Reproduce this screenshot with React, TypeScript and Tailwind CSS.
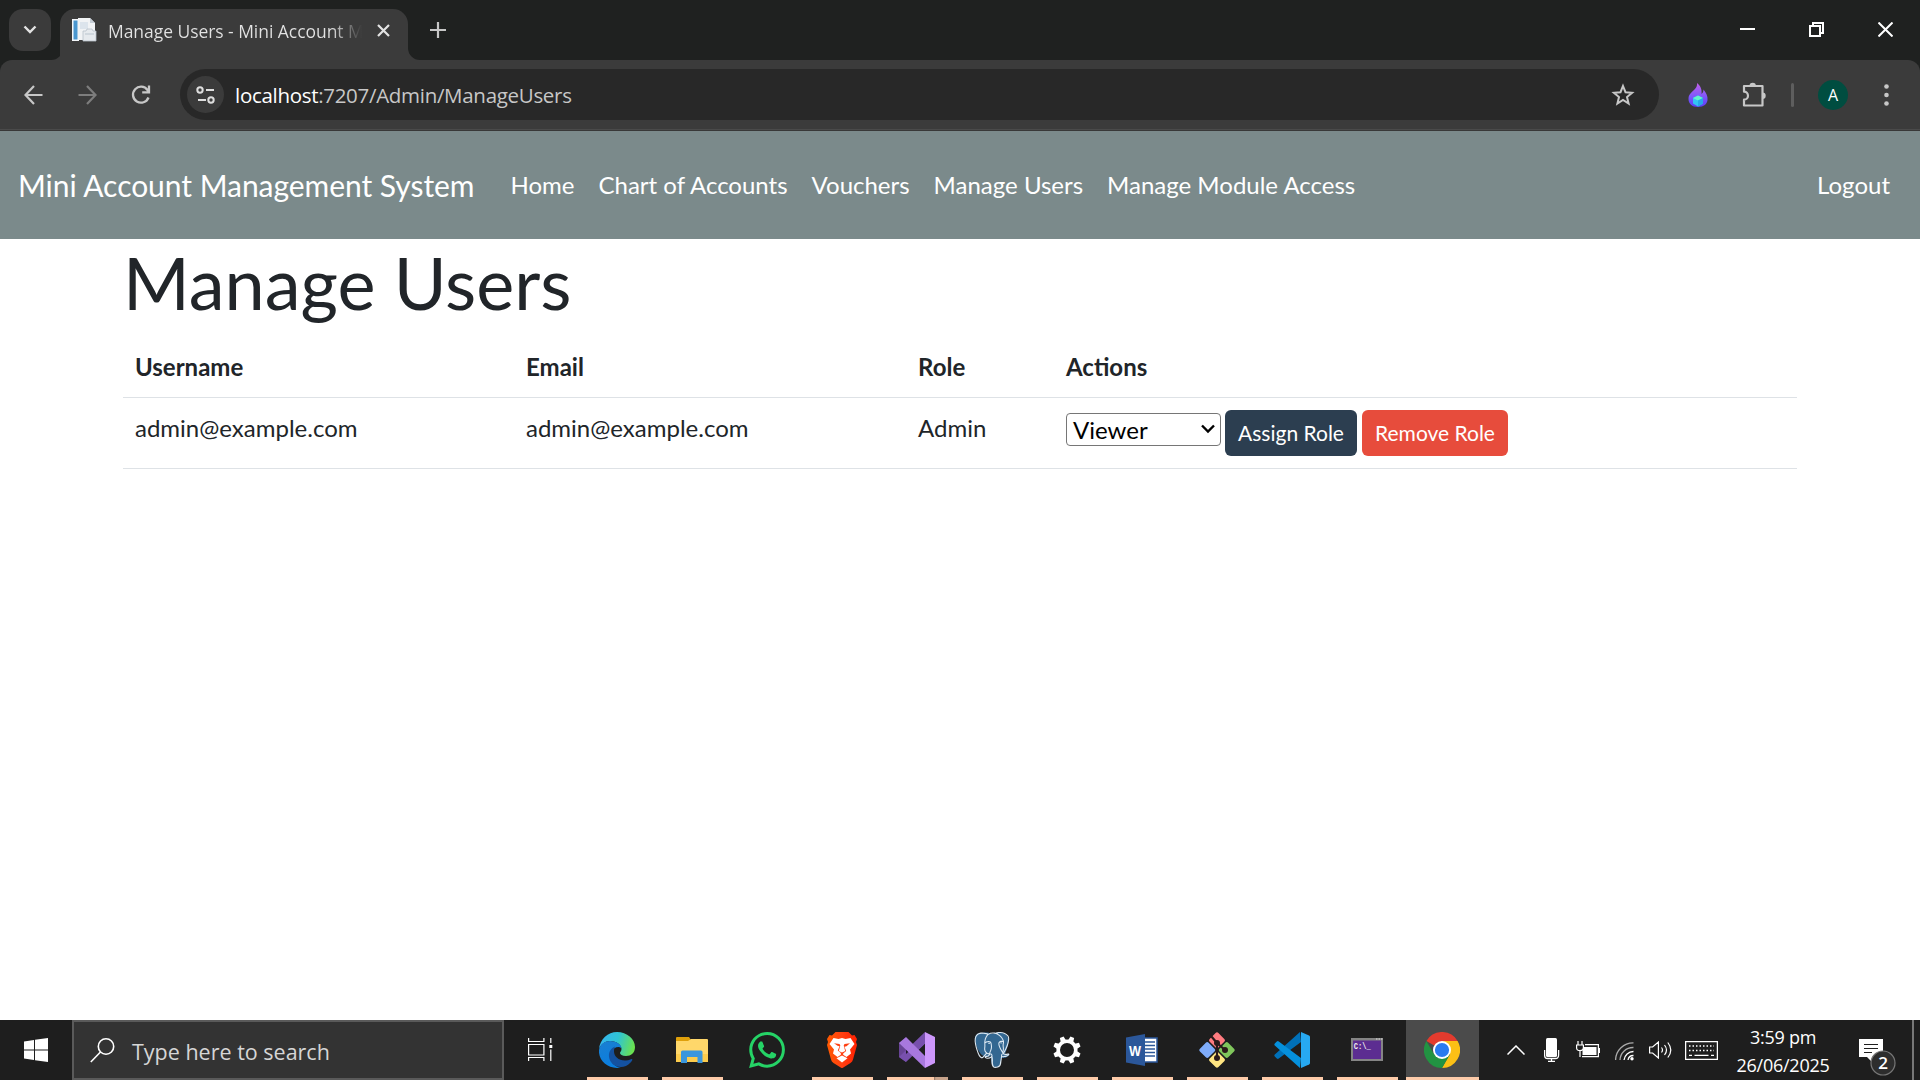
import React from "react";
import { SiPostgresql, SiWhatsapp } from "react-icons/si";

const ui = "font-['Open_Sans','Noto_Sans',sans-serif]";

function TabStrip() {
  return (
    <div className="flex h-[60px] items-start bg-[#1f2120] pl-[9px]">
      <div className="mt-[9px] flex h-[42px] w-[42px] items-center justify-center rounded-[14px] bg-[#3b3b3b]">
        <svg width="14" height="10" viewBox="0 0 14 10" fill="none" stroke="#e3e3e3" strokeWidth="2.4">
          <path d="M1.5 1.5 7 7l5.500-5.500" />
        </svg>
      </div>
      <div className="mt-[9px] flex h-[51px]">
        <svg className="mr-[-3px] self-end" width="12" height="12" viewBox="0 0 12 12">
          <path d="M12 0A12 12 0 0 1 0 12H12Z" fill="#3b3b3b" />
        </svg>
        <div className="flex h-full w-[348px] items-start rounded-t-[15px] bg-[#3b3b3b] pl-3">
          <svg className="mt-[8px] shrink-0" width="26" height="26" viewBox="0 0 26 26">
            <path d="M0 2h7v22H0z" fill="#f4f7fa" />
            <path d="M1.500 3.500h4v19h-4z" fill="#4a97d0" />
            <path d="M6 1h12l5 5v17H6z" fill="#f1f3f5" />
            <path d="M18 1v5h5z" fill="#c4ccd4" />
            <path d="M8 5h8v7H8z" fill="#dce4ec" />
            <path d="M11 14h3l1-2h5l1 2h3v10H11z" fill="#e6eaee" stroke="#b7c0c9" strokeWidth=".8" />
            <path d="M13 17h9" stroke="#b9c4ce" />
          </svg>
          <div className={`${ui} ml-[10px] mt-[10px] h-6 w-[254px] whitespace-nowrap bg-linear-to-r from-[#e3e3e3] from-88% to-[#3b3b3b] bg-clip-text text-[17.500px] leading-6 tracking-[-0.05px] text-transparent`}>
            Manage Users - Mini Account M
          </div>
          <svg className="ml-[15px] mt-[15px] shrink-0" width="13" height="13" viewBox="0 0 13 13" stroke="#e3e3e3" strokeWidth="2.200">
            <path d="m1 1 11 11M12 1 1 12" />
          </svg>
        </div>
        <svg className="self-end" width="12" height="12" viewBox="0 0 12 12">
          <path d="M0 0A12 12 0 0 0 12 12H0Z" fill="#3b3b3b" />
        </svg>
      </div>
      <svg className="ml-[10px] mt-[22px]" width="16" height="16" viewBox="0 0 16 16" stroke="#c7c7c7" strokeWidth="2.200">
        <path d="M8 0v16M0 8h16" />
      </svg>
      <div className="ml-auto mr-[27px] mt-[22px] flex">
        <svg className="mr-[54px]" width="15" height="15"><path d="M0 6h15v2H0z" fill="#fff" /></svg>
        <svg className="mr-[54px]" width="15" height="15" fill="none" stroke="#fff" strokeWidth="2">
          <path d="M1 4h10v10H1zM4 4V1h10v10h-3" />
        </svg>
        <svg width="15" height="15" stroke="#fff" strokeWidth="2"><path d="m.5.5 14 14m0-14-14 14" /></svg>
      </div>
    </div>
  );
}

function Toolbar() {
  return (
    <div className="bg-[#1f2120]">
      <div className="flex h-[71px] items-center rounded-t-[12px] border-b border-[#383838] bg-[#3b3b3b] pb-px pl-[24px] shadow-[inset_0_-1px_0_#4a4a4a]">
        <svg width="19" height="20" viewBox="0 0 19 20" fill="none" stroke="#c7c7c7" strokeWidth="2.200">
          <path d="M10 1 1.500 10l8.500 9M1.500 10H18.500" />
        </svg>
        <svg className="ml-[35px]" width="19" height="20" viewBox="0 0 19 20" fill="none" stroke="#7d7d7d" strokeWidth="2.200">
          <path d="m9 1 8.500 9L9 19M17.500 10H.5" />
        </svg>
        <svg className="ml-[34px]" width="20" height="20" viewBox="0 0 20 20" fill="none" stroke="#c7c7c7" strokeWidth="2.300">
          <path d="M17.500 12.500A8 8 0 1 1 16.500 5L18 7M18 .5V7.300H11.200" />
        </svg>
        <div className="ml-[29px] flex h-[51px] w-[1479px] items-center rounded-full bg-[#282828] pl-[7px]">
          <div className="flex h-[37px] w-[37px] items-center justify-center rounded-full bg-[#3b3b3b]">
            <svg width="20" height="18" viewBox="0 0 20 18" fill="none" stroke="#dedede" strokeWidth="2">
              <circle cx="4" cy="4" r="2.700" /><path d="M10 4h8M2 14h8" /><circle cx="15" cy="14" r="2.700" />
            </svg>
          </div>
          <div className={`${ui} ml-[11px] text-[20.500px] leading-7 tracking-[-0.3px] text-[#c7c7c7]`}>
            <span className="text-white">localhost</span>:7207/Admin/ManageUsers
          </div>
          <svg className="ml-auto mr-[24px]" width="24" height="24" viewBox="0 0 24 24" fill="none" stroke="#c7c7c7" strokeWidth="2">
            <path d="m12 3 2.500 6.200 6.600.5-5.100 4.300 1.600 6.500L12 17l-5.600 3.500L8 14 2.900 9.700l6.600-.5z" />
          </svg>
        </div>
        <svg className="ml-[29px]" width="20" height="24" viewBox="0 0 20 24">
          <defs><linearGradient id="flame" x1="0" y1="0" x2="0" y2="1"><stop stopColor="#c060e8" /><stop offset=".55" stopColor="#8057fb" /><stop offset="1" stopColor="#5840f5" /></linearGradient></defs>
          <path d="M9 0c4 3 5 7 4.500 11C15 10 15.500 8 15.500 6.500 18 10 20 13 19.500 17c-.5 4-3.500 7-9.500 7S.5 20.500.5 16 3 10 6 7c2-2 3.500-4 3-7Z" fill="url(#flame)" />
          <path d="m10 12.500 5 2.500v5.500l-5 3-5-3V15z" fill="#32c5f4" /><path d="m10 12.500 5 2.500-5 2.500L5 15z" fill="#62f3cb" /><path d="m10 17.500 5-2.500v5.500l-5 3z" fill="#28a8e8" />
        </svg>
        <svg className="ml-[33px]" width="27" height="26" viewBox="0 0 27 26">
          <path d="M3 4h18.500v19.500H3v-5.800a4 4 0 0 0 0-8z" fill="none" stroke="#c7c7c7" strokeWidth="2.200" strokeLinejoin="round" />
          <path d="M8.500 4a3.200 3.200 0 0 1 6.400 0zM21.500 10.500a3.200 3.200 0 0 1 0 6.400z" fill="#c7c7c7" />
        </svg>
        <div className="ml-[23px] h-6 w-[3px] rounded bg-[#5e5e5e]" />
        <div className={`${ui} ml-[24px] flex h-[30px] w-[30px] items-center justify-center rounded-full bg-[#004d40] text-[16px] text-white`}>A</div>
        <svg className="ml-[36px]" width="5" height="22" viewBox="0 0 5 22" fill="#c7c7c7">
          <circle cx="2.500" cy="2.500" r="2.300" /><circle cx="2.500" cy="11" r="2.300" /><circle cx="2.500" cy="19.500" r="2.300" />
        </svg>
      </div>
    </div>
  );
}

const links = ["Home", "Chart of Accounts", "Vouchers", "Manage Users", "Manage Module Access"];

function Page() {
  return (
    <main className="flex-1 bg-white font-['Lato',sans-serif] text-[24px] leading-[36px] text-[#212529]">
      <nav className="flex h-[108px] items-center bg-[#7b8a8b] px-[18px] text-white">
        <a className="mr-6 text-[30px] leading-[45px] tracking-[-0.04px]">Mini Account Management System</a>
        {links.map((l) => <a key={l} className="px-3">{l}</a>)}
        <a className="ml-auto px-3">Logout</a>
      </nav>
      <div className="mx-auto w-[1674px]">
        <h1 className="mb-3 text-[72px] leading-[86px]">Manage Users</h1>
        <table className="w-full table-fixed border-collapse text-left">
          <colgroup>
            <col className="w-[391px]" /><col className="w-[392px]" /><col className="w-[148px]" /><col />
          </colgroup>
          <thead>
            <tr className="h-[60px] border-b border-[#dee2e6]">
              {["Username", "Email", "Role", "Actions"].map((h) => <th key={h} className="px-3 pb-[11px] pt-3 font-bold">{h}</th>)}
            </tr>
          </thead>
          <tbody>
            <tr className="h-[71px] border-b border-[#dee2e6] align-top">
              <td className="px-3 pt-3">admin@example.com</td>
              <td className="px-3 pt-3">admin@example.com</td>
              <td className="px-3 pt-3">Admin</td>
              <td className="px-3 pt-3">
                <div className="flex items-start">
                  <div className="mt-[3px] flex h-[33px] w-[155px] items-center justify-between rounded-[4px] border border-[#767676] pl-[6px] pr-[5px] text-black">
                    <span className="pt-px">Viewer</span>
                    <svg width="14" height="10" viewBox="0 0 14 10" fill="none" stroke="#000" strokeWidth="2.400"><path d="m1 1.500 6 6 6-6" /></svg>
                  </div>
                  <button className="ml-1 h-[46px] w-[132px] rounded-[6px] bg-[#2c3e50] text-[21px] text-white">Assign Role</button>
                  <button className="ml-[5px] h-[46px] w-[146px] rounded-[6px] bg-[#e74c3c] text-[21px] text-white">Remove Role</button>
                </div>
              </td>
            </tr>
          </tbody>
        </table>
      </div>
    </main>
  );
}

function Edge() {
  return (
    <svg width="36" height="36" viewBox="0 0 36 36">
      <defs>
        <linearGradient id="e1" x1="0" y1=".3" x2="1" y2=".5"><stop stopColor="#35b5f0" /><stop offset=".5" stopColor="#2fc4d4" /><stop offset="1" stopColor="#6be24d" /></linearGradient>
        <linearGradient id="e2" x1="0" y1="0" x2=".4" y2="1"><stop stopColor="#1b7fd0" /><stop offset="1" stopColor="#0a7ee0" /></linearGradient>
      </defs>
      <path d="M0 17C1 7 9 0 18 0c10 0 18 7 18 15 0 6-4 9-9 9-4 0-6-1.500-6-3 0-1 1.500-1.500 1.500-4 0-4-5-8-11-8C6 9 2 12 0 17Z" fill="url(#e1)" />
      <path d="M0 18C1 12 6 9 11 9c7 0 11.500 4 11.500 7.500-2-3-8-1.500-10 3C9 27 14 35 22 35.500 10 38-1 29 0 18Z" fill="url(#e2)" />
      <path d="M16 14.500C10 17 8 24 12 30c4 6 14 7 19 1 1.500-1.500 3-3 2-4-1-.5-2 1-6 1.500-7 .5-12-4-12-9 0-2 .3-3.500 1-5Z" fill="#1451a0" />
    </svg>
  );
}
function Explorer() {
  return (
    <svg width="36" height="36" viewBox="0 0 36 36">
      <path d="M2 6a1 1 0 0 1 1-1h12l2 3-2 3H2z" fill="#dfa00b" />
      <path d="M2 9h12l3-2h16a1 1 0 0 1 1 1v22H2z" fill="#ffd76a" /><path d="M2 22h32v8H2z" fill="#fccb4c" />
      <path d="M7 31V20a1.500 1.500 0 0 1 1.500-1.500h18.500A1.500 1.500 0 0 1 28.500 20v11h-5v-6H13v6z" fill="#3a96dd" />
    </svg>
  );
}
function Brave() {
  return (
    <svg width="36" height="36" viewBox="0 0 36 36">
      <defs><linearGradient id="brave"><stop stopColor="#ff5a00" /><stop offset=".5" stopColor="#ff4012" /><stop offset="1" stopColor="#ff2000" /></linearGradient></defs>
      <path d="M11.500 0h13l3.500 3.500 2.500-.5 2.500 4-1 3 1 3-4 14.500q-.5 2-2.500 3.500L18.500 36h-1L9.500 31Q7.500 29.500 7 27.500L3 13l1-3-1-3 2.500-4 2.500.5z" fill="url(#brave)" />
      <path d="m9.500 6 5 1L18 6l3.500 1 5-1 4 6-4.500 5.500 1 4L22.500 25l-3-2h-3l-3 2L9 21.500l1-4L5.500 12z" fill="#fff" />
      <path d="m18 23.500 5.500 2.700L18 30.500l-5.500-4.300z" fill="#fff" />
      <path d="m10 11.200 5.500.8.800 1.500-1.500 5.500 3.200 1.500 3.200-1.500-1.500-5.500.8-1.500 5.500-.8-3.500 3-2 .5 1.700 4.300-3 2.500v1.500h-2.400V21l-3-2.500 1.700-4.300-2-.5z" fill="#ff4012" />
    </svg>
  );
}
function VisualStudio() {
  return (
    <svg width="36" height="36" viewBox="0 0 36 36">
      <path d="M0 11 7 6l0 24-7-5z" fill="#684495" /><path d="M0 25 26 0v12L7 30z" fill="#7850ad" />
      <path d="m7 14 4.500 4L7 22z" fill="#211a29" /><path d="m26 12-6 6 6 6z" fill="#1e1e1e" />
      <path d="M0 11 7 5l19 19v12z" fill="#a878de" /><path d="m26 0 10 5v26l-10 5z" fill="#cd97fb" />
    </svg>
  );
}
function Postgres() {
  return (
    <div className="grid place-items-center">
      <svg className="col-start-1 row-start-1" width="36" height="36" viewBox="0 0 36 36">
        <path d="M8 1c5-1 8 0 10 1 4-2 10-2 13 0 5 3 4 10 0 20l4 1c-2 3-5 3-8 3 0 5-1 9-5 9s-5-4-5-11c-3 2-7 1-9-1-3-2-7-11-7-16S4 1 8 1Z" fill="#336791" />
      </svg>
      <SiPostgresql className="col-start-1 row-start-1 text-[#dce8f2]" size={36} />
    </div>
  );
}
function Gear() {
  return (
    <svg width="36" height="36" viewBox="-18 -18 36 36" fill="#fff">
      <circle r="8.800" fill="none" stroke="#fff" strokeWidth="3.600" />
      {[22.5, 67.5, 112.5, 157.5, 202.5, 247.5, 292.5, 337.5].map((a) => <path key={a} d="M-2.800-9.500-2-13.800H2l.8 4.300z" transform={`rotate(${a})`} />)}
    </svg>
  );
}
function Word() {
  return (
    <svg width="36" height="36" viewBox="0 0 36 36">
      <path d="M18 6h15v24H18z" fill="#fff" stroke="#2b579a" strokeWidth="1.500" />
      <path d="M20 10h11M20 13.500h11M20 17h11M20 20.500h11M20 24h11" stroke="#2b579a" strokeWidth="1.500" />
      <path d="M2 5.500 21 2v32L2 30.500z" fill="#2b579a" />
      <text x="11" y="23.500" textAnchor="middle" fill="#fff" fontSize="14" fontWeight="700" fontFamily="Liberation Sans" textLength="12" lengthAdjust="spacingAndGlyphs">W</text>
    </svg>
  );
}
function GitBash() {
  return (
    <svg width="36" height="36" viewBox="0 0 36 36">
      <g transform="rotate(45 18 18)">
        <rect x="5" y="5" width="12.300" height="12.300" rx="2" fill="#ff7b80" />
        <rect x="18.800" y="5" width="12.300" height="12.300" rx="2" fill="#80c65c" />
        <rect x="18.800" y="18.800" width="12.300" height="12.300" rx="2" fill="#ffe582" />
        <rect x="5" y="18.800" width="12.300" height="12.300" rx="2" fill="#7facfa" />
      </g>
      <path d="m12 4 6 7v15M18 11l8 7" fill="none" stroke="#2b1a1a" strokeWidth="2.200" /><circle cx="18" cy="11" r="3" fill="#2b1a1a" /><circle cx="18" cy="26" r="3" fill="#2b1a1a" /><circle cx="26" cy="18" r="3" fill="#2b1a1a" />
    </svg>
  );
}
function VsCode() {
  return (
    <svg width="36" height="36" viewBox="0 0 36 36">
      <path d="M26 0 .8 22.500a1.500 1.500 0 0 0 0 2l2 2a1.500 1.500 0 0 0 2 0L27 10z" fill="#0070b8" />
      <path d="M26 36 .8 13.500a1.500 1.500 0 0 1 0-2l2-2a1.500 1.500 0 0 1 2 0L27 26z" fill="#0590dc" />
      <path d="m27 0 8 3.500a2 2 0 0 1 1 1.500v26a2 2 0 0 1-1 1.500L27 36z" fill="#27a9f2" />
    </svg>
  );
}
function Terminal() {
  return (
    <svg width="36" height="36" viewBox="0 0 36 36">
      <path d="M2 6h32v23H2z" fill="#858585" /><path d="M4 8.500h28v18.500H4z" fill="#5c2d91" />
      <path d="M27 6.500h1.500v1H27zm2.500 0H31v1h-1.500zm2.500 0h1.500v1H32z" fill="#ddd" />
      <text x="4.800" y="16.500" fill="#eee" fontSize="8.500" fontWeight="700" fontFamily="Liberation Mono" textLength="17" lengthAdjust="spacingAndGlyphs">C:\_</text>
    </svg>
  );
}
function Chrome() {
  return (
    <svg width="36" height="36" viewBox="0 0 36 36">
      <path d="M18 18 2.400 9A18 18 0 0 1 33.600 9H18z" fill="#e33b2e" />
      <path d="M18 9h15.600A18 18 0 0 1 18 36l7.800-13.500z" fill="#fcc015" />
      <path d="M2.400 9A18 18 0 0 0 18 36l7.800-13.500L18 18l-7.800 4.500z" fill="#229342" />
      <circle cx="18" cy="18" r="9" fill="#fff" /><circle cx="18" cy="18" r="7.100" fill="#2a7bf0" />
    </svg>
  );
}

const apps: { name: string; icon: React.ReactNode; open: boolean }[] = [
  { name: "edge", icon: <Edge />, open: true },
  { name: "explorer", icon: <Explorer />, open: true },
  { name: "whatsapp", icon: <SiWhatsapp size={36} color="#25d366" />, open: false },
  { name: "brave", icon: <Brave />, open: true },
  { name: "vs", icon: <VisualStudio />, open: true },
  { name: "pg", icon: <Postgres />, open: true },
  { name: "settings", icon: <Gear />, open: true },
  { name: "word", icon: <Word />, open: true },
  { name: "git", icon: <GitBash />, open: true },
  { name: "code", icon: <VsCode />, open: true },
  { name: "cmd", icon: <Terminal />, open: true },
];

function Taskbar() {
  return (
    <footer className={`${ui} flex h-[60px] items-center bg-[#1e1e1e] text-white`}>
      <div className="flex w-[72px] justify-center">
        <svg width="24" height="24" viewBox="0 0 24 24" fill="#fff"><path d="M0 3.400 10 2v9.500H0zM11 1.800 24 0v11.500H11zM0 12.500h10V22L0 20.600zm11 0h13V24l-13-1.800z" /></svg>
      </div>
      <div className="flex h-[60px] w-[432px] items-center border-2 border-[#5a5a5a] bg-[#333] pl-4">
        <svg width="25" height="25" viewBox="0 0 25 25" fill="none" stroke="#fff" strokeWidth="1.600"><circle cx="16" cy="8.500" r="7.700" /><path d="M10.500 14 .8 24" /></svg>
        <span className="ml-[17px] mt-[3px] text-[21.500px] leading-7 text-[#d6d6d6]">Type here to search</span>
      </div>
      <svg className="ml-6" width="25" height="24" viewBox="0 0 25 24" fill="none" stroke="#fff" strokeWidth="1.200">
        <path d="M.6 0v3.500h15.300V0M.6 6.500h15.300v10.500H.6zM.6 23v-3.500h15.300V23M22.800 0v5M22.800 11.500V23" /><path d="M21.300 7h3v3h-3z" fill="#fff" stroke="none" />
      </svg>
      <div className="ml-[27px] flex">
        {apps.map((a) => (
          <div key={a.name} className="flex h-[60px] w-[75px] flex-col items-center">
            <div className="flex h-[57px] items-center pr-px pt-[3px]">{a.icon}</div>
            {a.open && <div className={a.name === "vs" ? "h-[3px] w-[61px] bg-linear-to-r from-[#fdcba9] from-77% via-[#8a6f5f] via-77% to-[#c7a38b] to-80%" : "h-[3px] w-[61px] bg-[#fdcba9]"} />}
          </div>
        ))}
        <div className="ml-[1px] flex h-[60px] w-[73px] flex-col items-center bg-[#4b4b4b]">
          <div className="flex h-[57px] items-center pr-px pt-[3px]"><Chrome /></div>
          <div className="h-[3px] w-full bg-[#fdcba9]" />
        </div>
      </div>
      <svg className="ml-[28px]" width="18" height="10" viewBox="0 0 18 10" fill="none" stroke="#fff" strokeWidth="1.500"><path d="m.5 9.500 8.500-8.500 8.500 8.500" /></svg>
      <svg className="ml-[19px]" width="16" height="24" viewBox="0 0 16 24" fill="none" stroke="#fff" strokeWidth="1.300"><rect x="2" y="0" width="11" height="19" rx="1.500" fill="#fff" stroke="none" /><path d="M.6 12v5q0 3.500 3 3.500h8q3 0 3-3.500v-5M7.500 20.500v3M4 23.400h7" /></svg>
      <svg className="ml-[16px] mb-[2px]" width="24" height="17" viewBox="0 0 24 17" fill="none" stroke="#fff" strokeWidth="1.200"><path d="M2 0v4m4-4v4M.6 4h6.800v3Q7.400 9.500 4 9.500T.6 7zM4 9.500V16M9 3.600h13.400v12H6" /><path d="M8 6h12.500v8H6.500v-4.500z" fill="#fff" stroke="none" /><path d="M23.500 7v5" /></svg>
      <svg className="ml-[15px] mt-[2px]" width="20" height="19" viewBox="0 0 20 19" fill="none" strokeWidth="1.300"><path d="M.6 18A17.500 17.500 0 0 1 18.500.8M5 18A13 13 0 0 1 18.500 5.500" stroke="#aaa" /><path d="M9 18a9.500 9.500 0 0 1 9.500-8.500M13 18a5.500 5.500 0 0 1 5.500-4.500" stroke="#fff" /><circle cx="17" cy="16.800" r="1.700" fill="#fff" /></svg>
      <svg className="ml-[14px]" width="23" height="18" viewBox="0 0 23 18" fill="none" stroke="#fff" strokeWidth="1.200"><path d="M.6 6h3l5.800-5v16L3.600 12h-3zM12.500 6.500q2 2.500 0 5M15.500 4q4 5 0 10M18.800 1.500q6 7.500 0 15" /></svg>
      <svg className="ml-[13px]" width="33" height="19" viewBox="0 0 33 19" fill="none" stroke="#fff" strokeWidth="1.300"><path d="M.6.6h31.800v17.800H.6z" /><path d="M4 5h25M4 9.500h25" strokeDasharray="1.500 2" /><path d="M4 14.300h3M9.500 14.300h14M26 14.300h3" /></svg>
      <div className="ml-[16px] mt-px flex w-[98px] flex-col items-center text-[18px] leading-[28px] tracking-[-0.25px]">
        <span>3:59 pm</span><span>26/06/2025</span>
      </div>
      <svg className="ml-[27px] mt-[13px]" width="38" height="38" viewBox="0 0 38 38">
        <path d="M0 1h24v18H14v6l-6-6H0z" fill="#fff" /><path d="M5 6.500h14M5 10.500h14M5 14.500h8" stroke="#1e1e1e" strokeWidth="1.200" />
        <circle cx="24" cy="25" r="12" fill="#2d2d2d" stroke="#777" strokeWidth="1.200" />
        <text x="24" y="31" textAnchor="middle" fontSize="17" fontWeight="600" fill="#fff">2</text>
      </svg>
      <div className="ml-auto mr-[6px] h-[60px] w-[2px] bg-[#777]" />
    </footer>
  );
}

export default function App() {
  return (
    <div className="flex h-[1080px] w-[1920px] flex-col overflow-hidden">
      <TabStrip />
      <Toolbar />
      <Page />
      <Taskbar />
    </div>
  );
}
